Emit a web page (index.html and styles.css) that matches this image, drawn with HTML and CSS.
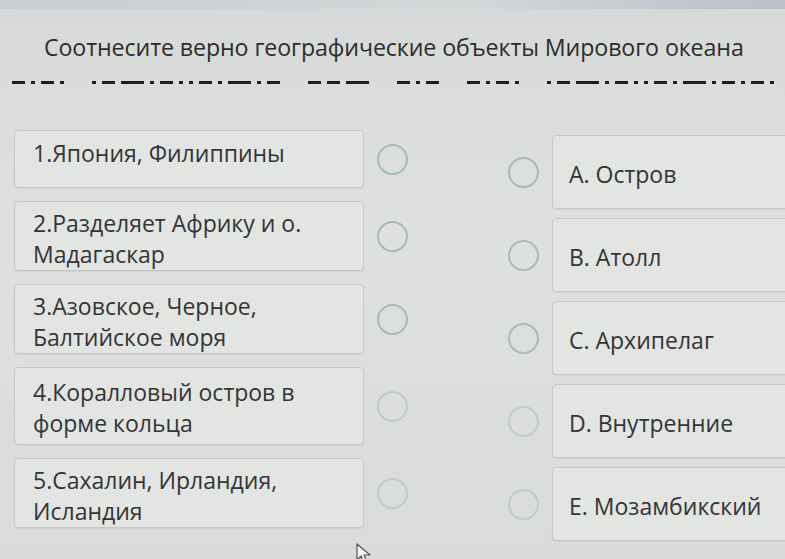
FILE: index.html
```html
<!DOCTYPE html>
<html lang="ru">
<head>
<meta charset="utf-8">
<title>Соотнесите</title>
<link rel="stylesheet" href="styles.css">
</head>
<body>
<div class="topstrip"></div>
<h1 class="title">Соотнесите верно географические объекты Мирового океана</h1>
<div class="redacted">
  <i class="d m"></i><i class="d s"></i><i class="d m"></i><i class="d s"></i><b class="sp"></b>
  <i class="d s"></i><i class="d m"></i><i class="d l"></i><i class="d s"></i><i class="d m"></i><i class="d s"></i><i class="d s"></i><i class="d m"></i><i class="d s"></i><i class="d l"></i><i class="d s"></i><i class="d m"></i><b class="sp"></b>
  <i class="d m"></i><i class="d m"></i><i class="d l"></i><b class="sp"></b>
  <i class="d m"></i><i class="d s"></i><i class="d m"></i><b class="sp"></b>
  <i class="d m"></i><i class="d s"></i><i class="d m"></i><i class="d s"></i><b class="sp"></b>
  <i class="d s"></i><i class="d m"></i><i class="d l"></i><i class="d s"></i><i class="d m"></i><i class="d s"></i><i class="d s"></i><i class="d m"></i><i class="d s"></i><i class="d l"></i><i class="d s"></i><i class="d m"></i><i class="d s"></i><i class="d m"></i><i class="d s"></i>
</div>
<div class="board">
  <div class="col left">
    <div class="row"><div class="card one">1.Япония, Филиппины</div><span class="dot"></span></div>
    <div class="row"><div class="card">2.Разделяет Африку и о. Мадагаскар</div><span class="dot"></span></div>
    <div class="row"><div class="card">3.Азовское, Черное, Балтийское моря</div><span class="dot"></span></div>
    <div class="row"><div class="card tall">4.Коралловый остров в форме кольца</div><span class="dot"></span></div>
    <div class="row"><div class="card">5.Сахалин, Ирландия, Исландия</div><span class="dot"></span></div>
  </div>
  <div class="col right">
    <div class="row"><span class="dot"></span><div class="card opt">A. Остров</div></div>
    <div class="row"><span class="dot"></span><div class="card opt">B. Атолл</div></div>
    <div class="row"><span class="dot"></span><div class="card opt">C. Архипелаг</div></div>
    <div class="row"><span class="dot"></span><div class="card opt">D. Внутренние</div></div>
    <div class="row"><span class="dot"></span><div class="card opt">E. Мозамбикский</div></div>
  </div>
</div>
<svg class="cursor" width="16" height="22" viewBox="0 0 16 22"><path d="M1 1 L1 17 L5 13 L8 20 L11 19 L8 12 L14 12 Z" fill="#f4f4f2" stroke="#555" stroke-width="1.2" stroke-linejoin="round"/></svg>
</body>
</html>
```

FILE: styles.css
```css
html, body {
  margin: 0;
  padding: 0;
}
body {
  width: 785px;
  height: 559px;
  overflow: hidden;
  position: relative;
  background: linear-gradient(180deg, #d6d9d7 0%, #dfe1de 40%, #dadcd9 100%);
  font-family: "Open Sans", "Noto Sans", sans-serif;
  color: #2f3131;
}
.topstrip {
  height: 9px;
  background: linear-gradient(90deg, #c9ced2, #d3d7da 60%, #b9c0c6);
}
.title {
  margin: 22px 0 0 44px;
  font-size: 23.2px;
  font-weight: 400;
  line-height: 32px;
  color: #2b2d2d;
  letter-spacing: -0.1px;
}
.redacted {
  display: flex;
  align-items: center;
  gap: 6px;
  margin: 16px 0 0 12px;
  height: 6px;
  white-space: nowrap;
}
.d {
  display: block;
  height: 3px;
  background: #1e1f20;
  flex: none;
}
.d.s { width: 4px; }
.d.m { width: 13px; }
.d.l { width: 23px; }
.sp { display: block; width: 16px; flex: none; }
.board {
  display: flex;
  gap: 100px;
  margin: 45px 0 0 14px;
}
.col {
  display: flex;
  flex-direction: column;
}
.left { gap: 13px; }
.right { gap: 9px; margin-top: 5px; }
.row {
  display: flex;
  align-items: center;
  gap: 13px;
}
.card {
  box-sizing: border-box;
  border: 1px solid #c5c8c6;
  border-radius: 4px;
  background: #e3e5e2;
  font-size: 23px;
  line-height: 31px;
  color: #333536;
  box-shadow: 0 1px 1px rgba(0,0,0,0.05);
}
.left .card {
  width: 350px;
  height: 70px;
  padding: 6px 12px 0 18px;
}
.left .card.one {
  height: 58px;
  padding-top: 7px;
}
.left .card.tall { height: 78px; padding-top: 9px; }
.right .card {
  width: 260px;
  height: 74px;
  display: flex;
  align-items: center;
  padding: 4px 16px 0;
}
.dot {
  width: 27px;
  height: 27px;
  border: 2px solid #a8b9c1;
  border-radius: 50%;
  flex: none;
}
.left .row:nth-child(4) .dot,
.left .row:nth-child(5) .dot,
.right .row:nth-child(4) .dot,
.right .row:nth-child(5) .dot { border-color: #bfcbcf; }
.cursor {
  position: absolute;
  left: 356px;
  top: 543px;
}
```
